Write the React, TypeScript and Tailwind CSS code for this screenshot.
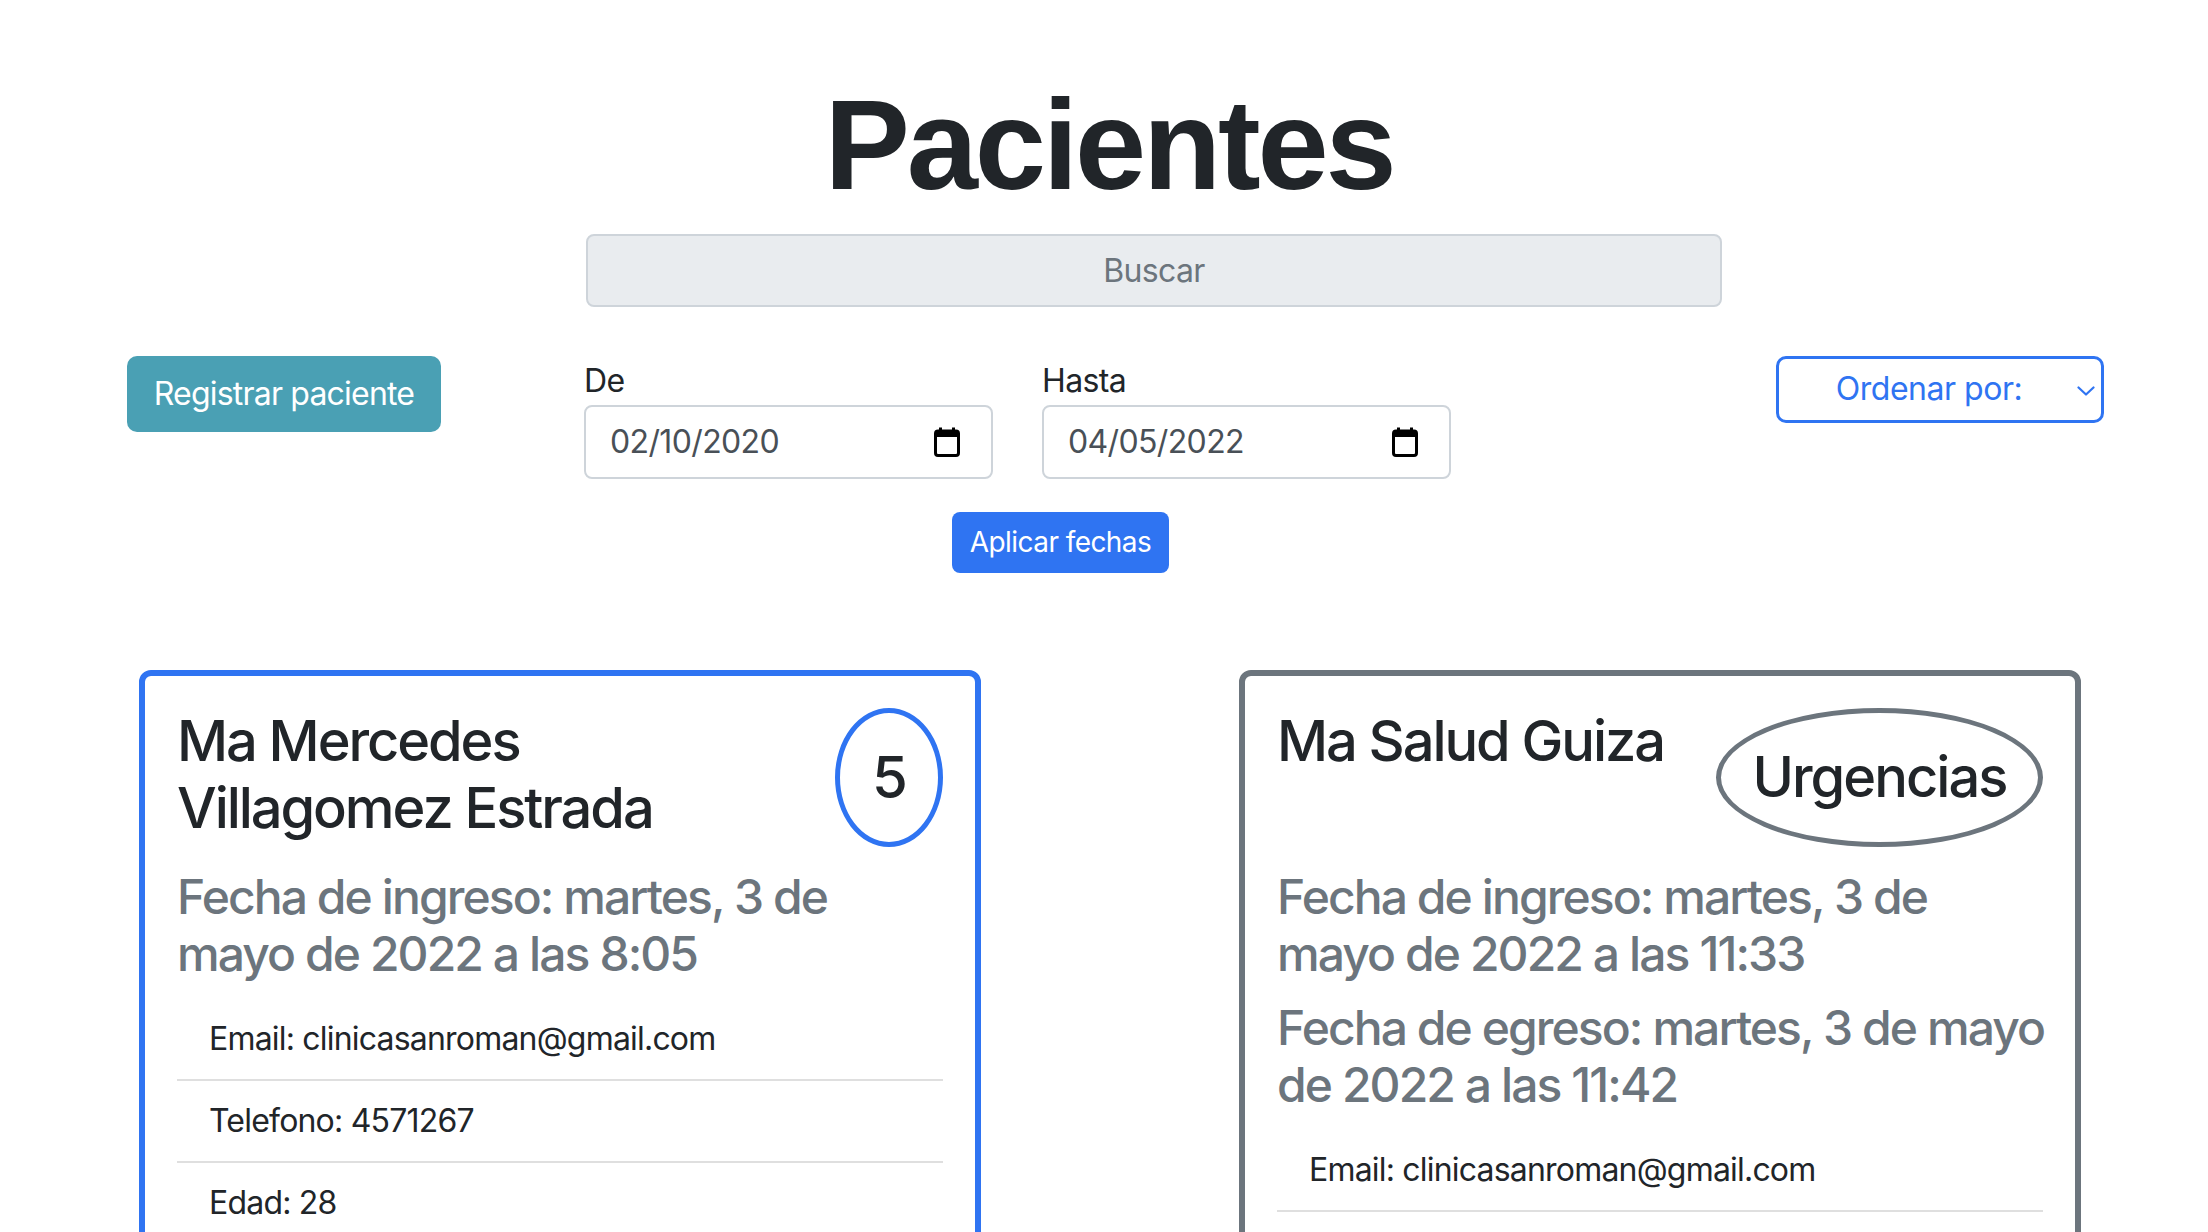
import React from "react";

function CalendarIcon() {
  return (
    <svg width="28" height="30" viewBox="0 0 28 30" aria-hidden="true">
      <rect x="6" y="0.5" width="3" height="5" fill="#000" />
      <rect x="19" y="0.5" width="3" height="5" fill="#000" />
      <rect x="2.5" y="4" width="23" height="24.5" rx="2.5" fill="none" stroke="#000" strokeWidth="3" />
      <rect x="2.5" y="4" width="23" height="6" fill="#000" />
    </svg>
  );
}

function Chevron() {
  return (
    <svg width="18" height="12" viewBox="0 0 18 12" aria-hidden="true">
      <path d="M1.5 2.5 L9 9.5 L16.5 2.5" fill="none" stroke="#2f74f2" strokeWidth="2.2" strokeLinecap="round" strokeLinejoin="round" />
    </svg>
  );
}

function DateField({ label, value }: { label: string; value: string }) {
  return (
    <div className="flex flex-col">
      <label className="mt-[1px] text-[32px] leading-[48px] tracking-[-0.02em] text-[#212529]">{label}</label>
      <div className="flex h-[74px] w-[409px] items-center justify-between rounded-[8px] border-2 border-[#ced4da] bg-white pl-[24px] pr-[30px] text-[32px] tracking-[-0.02em] text-[#495057]">
        <span>{value}</span>
        <CalendarIcon />
      </div>
    </div>
  );
}

function ListItem({ children }: { children: React.ReactNode }) {
  return (
    <li className="border-b-2 border-[#dfdfdf] px-[32px] py-[16px] text-[32px] leading-[48px] tracking-[-0.025em] text-[#212529]">
      {children}
    </li>
  );
}

export default function App() {
  return (
    <div className="h-[1232px] w-[2208px] overflow-hidden bg-white font-[Inter,'Noto_Sans',sans-serif] text-[#212529]">
      <h1 className="pl-[10px] pt-[68px] text-center font-['Liberation_Sans',Arial,sans-serif] text-[128px] font-bold leading-[1.2] tracking-[-0.025em] text-[#212529]">
        Pacientes
      </h1>

      <input
        readOnly
        placeholder="Buscar"
        className="ml-[586px] mt-[12px] block h-[73px] w-[1136px] rounded-[8px] border-2 border-[#ced4da] bg-[#e9ecef] text-center text-[32px] tracking-[-0.02em] text-[#212529] outline-none placeholder:text-[#6c757d]"
      />

      <div className="mt-[49px] flex items-start">
        <button className="ml-[127px] h-[76px] w-[314px] rounded-[10px] bg-[#4aa0b4] text-[32px] tracking-[-0.025em] text-white">
          Registrar paciente
        </button>

        <div className="ml-[143px] flex gap-[49px]">
          <DateField label="De" value="02/10/2020" />
          <DateField label="Hasta" value="04/05/2022" />
        </div>

        <div className="relative ml-[325px] flex h-[67px] w-[328px] items-center justify-center rounded-[10px] border-[3px] border-[#2f74f2] bg-white pr-[22px] text-[32px] tracking-[-0.015em] text-[#2f74f2]">
          <span>Ordenar por:</span>
          <span className="absolute right-[6px] top-[26px] flex">
            <Chevron />
          </span>
        </div>
      </div>

      <button className="ml-[952px] mt-[33px] block h-[61px] w-[217px] rounded-[8px] bg-[#2f74f2] text-[28px] tracking-[-0.02em] text-white">
        Aplicar fechas
      </button>

      <div className="mt-[97px] flex items-start gap-[258px] pl-[139px]">
        {/* Card 1 */}
        <div className="w-[842px] rounded-[12px] border-[6px] border-[#2f74f2] px-[32px] pt-[32px]">
          <div className="flex items-start justify-between">
            <h3 className="max-w-[540px] text-[56px] font-medium leading-[1.2] tracking-[-0.037em] text-[#212529]">
              Ma Mercedes Villagomez Estrada
            </h3>
            <div className="flex h-[139px] w-[108px] items-center justify-center rounded-[50%] border-[5px] border-[#2f74f2] text-[58px] font-medium tracking-[-0.03em] text-[#212529]">
              5
            </div>
          </div>
          <h4 className="mb-[16px] mt-[21px] text-[48px] font-medium leading-[1.2] tracking-[-0.04em] text-[#6c757d]">
            Fecha de ingreso: martes, 3 de mayo de 2022 a las 8:05
          </h4>
          <ul>
            <ListItem>Email: clinicasanroman@gmail.com</ListItem>
            <ListItem>Telefono: 4571267</ListItem>
            <ListItem>Edad: 28</ListItem>
          </ul>
        </div>

        {/* Card 2 */}
        <div className="w-[842px] rounded-[12px] border-[6px] border-[#6c757d] px-[32px] pt-[32px]">
          <div className="flex items-start justify-between">
            <h3 className="max-w-[420px] text-[56px] font-medium leading-[1.2] tracking-[-0.037em] text-[#212529]">
              Ma Salud Guiza
            </h3>
            <div className="flex h-[139px] w-[327px] items-center justify-center rounded-[50%] border-[5px] border-[#6c757d] text-[56px] font-medium tracking-[-0.035em] text-[#212529]">
              Urgencias
            </div>
          </div>
          <h4 className="mb-[16px] mt-[21px] text-[48px] font-medium leading-[1.2] tracking-[-0.04em] text-[#6c757d]">
            Fecha de ingreso: martes, 3 de mayo de 2022 a las 11:33
          </h4>
          <h4 className="mb-[16px] whitespace-nowrap text-[48px] font-medium leading-[1.2] tracking-[-0.04em] text-[#6c757d]">
            Fecha de egreso: martes, 3 de mayo
            <br />
            de 2022 a las 11:42
          </h4>
          <ul>
            <ListItem>Email: clinicasanroman@gmail.com</ListItem>
            <ListItem>Telefono: 4571267</ListItem>
            <ListItem>Edad: 28</ListItem>
          </ul>
        </div>
      </div>
    </div>
  );
}
